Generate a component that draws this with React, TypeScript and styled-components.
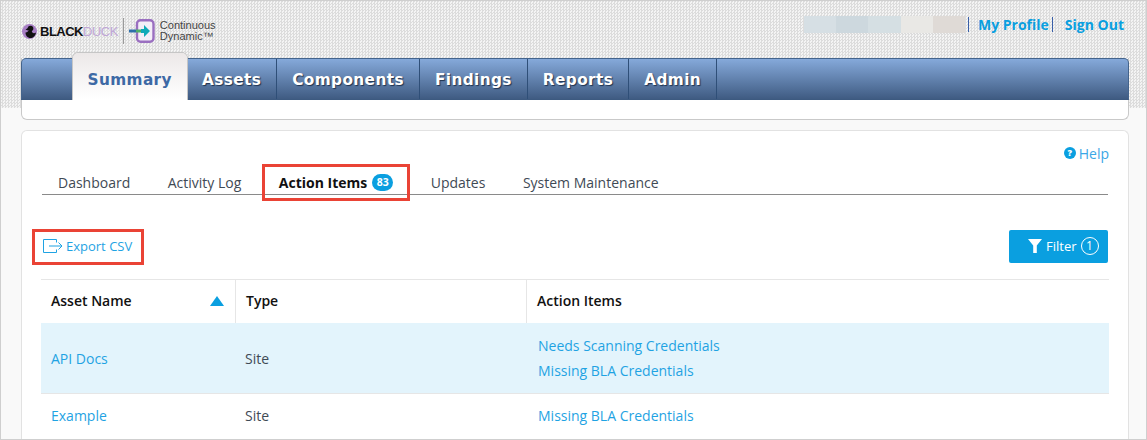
import React from "react";
import styled, { createGlobalStyle } from "styled-components";

const Global = createGlobalStyle`
  html, body { margin: 0; padding: 0; background: #f9f9f9; }
  body { font-family: "Open Sans", "Liberation Sans", sans-serif; color: #333; }
  * { box-sizing: border-box; }
`;

const Frame = styled.div`
  width: 1147px;
  height: 440px;
  overflow: hidden;
  border: 1px solid #cfcfcf;
  background: #f9f9f9;
`;

const Header = styled.header`
  height: 107px;
  padding: 0 17px 0 20px;
  background-color: #e8e8e8;
  background-image: repeating-conic-gradient(#dcdcdc 0 25%, #f4f4f4 0 50%);
  background-size: 3px 3px;
`;

const TopRow = styled.div`
  height: 57px;
  display: flex;
  justify-content: space-between;
  align-items: flex-start;
`;

const Logo = styled.div`
  display: flex;
  align-items: center;
  margin-top: 16px;
  height: 28px;
`;

const Duck = styled.svg`
  width: 15px;
  height: 15px;
  margin: 0 3px 0 1px;
`;

const BrandWord = styled.span<{ $light?: boolean }>`
  font-family: "Liberation Sans", Arial, sans-serif;
  font-size: 13px;
  font-weight: ${(p) => (p.$light ? 400 : 700)};
  letter-spacing: -0.5px;
  color: ${(p) => (p.$light ? "#bfa6d6" : "#111")};
`;

const LogoRule = styled.div`
  width: 1px;
  height: 26px;
  margin: 0 5px 0 5px;
  background: #9a9a9a;
`;

const ProductMark = styled.svg`
  width: 26px;
  height: 24px;
  margin-right: 5px;
`;

const ProductName = styled.div`
  font-family: "Liberation Sans", Arial, sans-serif;
  font-size: 11px;
  line-height: 11.5px;
  color: #444;
`;

const UserLinks = styled.div`
  display: flex;
  align-items: center;
  margin-top: 13px;
  margin-right: 5px;
  height: 20px;
  font-size: 14px;
  font-weight: 700;
  color: #0a9fe0;
`;

const Blur = styled.div`
  display: flex;
  height: 17px;
`;

const BlurBlock = styled.span<{ $c: string }>`
  width: 32.2px;
  background: ${(p) => p.$c};
`;

const Sep = styled.span<{ $gap: number }>`
  width: 1px;
  height: 15px;
  margin: 0 ${(p) => p.$gap}px 0 3px;
  background: #3a5fa8;
`;

const NavCard = styled.div`
  height: 62px;
  background: #fff;
  border: 1px solid #c9c9c9;
  border-top: none;
  border-radius: 0 0 6px 6px;
`;

const NavBar = styled.nav`
  height: 42px;
  margin: 0 -1px;
  padding-left: 51px;
  display: flex;
  border: 1px solid #44648c;
  border-bottom-color: #3d5a80;
  border-radius: 5px 5px 0 0;
  background: linear-gradient(#85a9da, #3f5b82);
`;

const NavItem = styled.div<{ $active?: boolean }>`
  height: ${(p) => (p.$active ? "47px" : "40px")};
  margin-top: ${(p) => (p.$active ? "-6px" : "0")};
  padding: ${(p) => (p.$active ? "6px 15px 0 14.5px" : "1px 15px 0")};
  display: flex;
  align-items: center;
  font-family: "DejaVu Sans", Verdana, sans-serif;
  font-size: 15.3px;
  font-weight: 700;
  letter-spacing: 0.4px;
  color: ${(p) => (p.$active ? "#3d69a5" : "#fff")};
  text-shadow: ${(p) => (p.$active ? "none" : "1px 1px 1px #1f3350")};
  background: ${(p) => (p.$active ? "linear-gradient(#ece8e8, #fff)" : "transparent")};
  border-right: ${(p) => (p.$active ? "none" : "1px solid #2f4f78")};
  border-radius: ${(p) => (p.$active ? "5px 5px 0 0" : "0")};
  box-shadow: ${(p) => (p.$active ? "0 -1px 0 #c6c6c6, 1px 0 0 #c6c6c6, -1px 0 0 #c6c6c6" : "none")};
`;

const Page = styled.main`
  margin: 22px 17px 0 20px;
  padding: 0 20px;
  height: 330px;
  background: #fff;
  border: 1px solid #e2e2e2;
  border-bottom: none;
  border-radius: 6px 6px 0 0;
`;

const HelpRow = styled.div`
  height: 35px;
  padding: 9px 0 0;
  margin-right: -1px;
  display: flex;
  justify-content: flex-end;
  align-items: center;
  gap: 3px;
  font-size: 14px;
  color: #3ba7e6;
`;

const HelpDot = styled.span`
  width: 12px;
  height: 12px;
  border-radius: 50%;
  background: #0a9fe0;
  color: #fff;
  font-size: 9px;
  font-weight: 800;
  line-height: 12px;
  text-align: center;
`;

const Tabs = styled.div`
  height: 29px;
  display: flex;
  border-bottom: 1px solid #8a8a8a;
`;

const Tab = styled.div<{ $active?: boolean }>`
  position: relative;
  height: 28px;
  padding: 4px 16px 0;
  margin-right: 5.5px;
  display: flex;
  align-items: center;
  gap: 5px;
  font-size: 14px;
  font-weight: ${(p) => (p.$active ? 700 : 400)};
  color: ${(p) => (p.$active ? "#111" : "#3f4a55")};
`;

const Count = styled.span`
  width: 21px;
  height: 17px;
  border-radius: 9px;
  background: #0a9fe0;
  color: #fff;
  font-size: 10.5px;
  font-weight: 700;
  line-height: 17px;
  text-align: center;
`;

const Callout = styled.span<{ $t: number; $r: number; $b: number; $l: number }>`
  position: absolute;
  top: ${(p) => p.$t}px;
  right: ${(p) => p.$r}px;
  bottom: ${(p) => p.$b}px;
  left: ${(p) => p.$l}px;
  border: 3px solid #ea4335;
`;

const Toolbar = styled.div`
  height: 85px;
  display: flex;
  justify-content: space-between;
  align-items: flex-start;
  padding-top: 35px;
  margin: 0 -1px;
  padding-right: 1px;
  border-bottom: 1px solid #e6e6e6;
`;

const ExportLink = styled.a`
  position: relative;
  display: flex;
  align-items: center;
  gap: 3px;
  height: 32px;
  padding-left: 2px;
  font-size: 13px;
  color: #1fa3e3;
`;

const ExportIcon = styled.svg`
  width: 20px;
  height: 14px;
`;

const FilterButton = styled.button`
  width: 99px;
  height: 33px;
  padding: 0 0 1px 19px;
  display: flex;
  align-items: center;
  gap: 4px;
  border: none;
  border-radius: 2px;
  background: #0a9fe0;
  color: #fff;
  font-family: inherit;
  font-size: 13px;
  font-weight: 400;
`;

const FilterCount = styled.span`
  width: 18px;
  height: 18px;
  border: 1px solid #fff;
  border-radius: 50%;
  font-size: 12px;
  line-height: 16px;
  text-align: center;
`;

const Grid = styled.div`
  display: grid;
  grid-template-columns: 195px 291px 1fr;
  margin: 0 -1px;
  font-size: 14px;
`;

const HeadCell = styled.div<{ $last?: boolean }>`
  height: 43px;
  padding: 0 11px 2px 10px;
  display: flex;
  align-items: center;
  justify-content: space-between;
  font-weight: 600;
  color: #111;
  border-right: ${(p) => (p.$last ? "none" : "1px solid #e6e6e6")};
`;

const SortArrow = styled.span`
  width: 0;
  height: 0;
  border-left: 7px solid transparent;
  border-right: 7px solid transparent;
  border-bottom: 10px solid #0a9fe0;
`;

const Cell = styled.div<{ $hl?: boolean; $h: number; $pl: number; $pt: number; $pb: number }>`
  height: ${(p) => p.$h}px;
  padding: ${(p) => p.$pt}px 10px ${(p) => p.$pb}px ${(p) => p.$pl}px;
  display: flex;
  flex-direction: column;
  justify-content: center;
  gap: 7px;
  background: ${(p) => (p.$hl ? "#e3f4fc" : "#fff")};
  border-bottom: 1px solid #e6e6e6;
  color: #3f4a55;
`;

const RowLink = styled.a`
  color: #1fa3e3;
  line-height: 18px;
`;

const rows = [
  { name: "API Docs", type: "Site", items: ["Needs Scanning Credentials", "Missing BLA Credentials"], hl: true, h: 71, pt: 1, pb: 0 },
  { name: "Example", type: "Site", items: ["Missing BLA Credentials"], hl: false, h: 46, pt: 0, pb: 2 },
];

export default function App() {
  return (
    <>
      <Global />
      <Frame>
        <Header>
          <TopRow>
            <Logo>
              <Duck viewBox="0 0 15 15">
                <circle cx="7.5" cy="7.5" r="7.5" fill="#a77ec4" />
                <circle cx="8.5" cy="4.5" r="2.8" fill="#111" />
                <path d="M6 4L3.500 5.500 6 6.500z" fill="#111" />
                <path d="M6.500 6.500C6 8 4 8.500 3.500 8.500c0 3 2 5.500 5 5.500 2.500 0 5-2 5.500-5.500-1.500 1-3 .8-3.800-.2-.5-.7-.5-1.500-.2-2.300z" fill="#111" />
              </Duck>
              <BrandWord>BLACK</BrandWord>
              <BrandWord $light>DUCK</BrandWord>
              <LogoRule />
              <ProductMark viewBox="0 0 26 24">
                <rect x="8" y="1.200" width="16.500" height="21.600" rx="3.500" fill="#f4eef8" stroke="#9a6fc0" strokeWidth="2.400" />
                <rect x="0" y="10.500" width="7" height="3" fill="#2f6fa8" />
                <rect x="7" y="10.500" width="5" height="3" fill="#4fb06a" />
                <path d="M12 10h3V6l6 6-6 6v-4h-3z" fill="#10a9b8" />
              </ProductMark>
              <ProductName>
                Continuous
                <br />
                Dynamic™
              </ProductName>
            </Logo>
            <UserLinks>
              <Blur>
                <BlurBlock $c="#d6dfe4" />
                <BlurBlock $c="#cdd8de" />
                <BlurBlock $c="#d5dfe3" />
                <BlurBlock $c="#e9e8e5" />
                <BlurBlock $c="#dfdad6" />
              </Blur>
              <Sep $gap={9} />
              My Profile
              <Sep $gap={12} />
              Sign Out
            </UserLinks>
          </TopRow>
          <NavCard>
            <NavBar>
              <NavItem $active>Summary</NavItem>
              <NavItem>Assets</NavItem>
              <NavItem>Components</NavItem>
              <NavItem>Findings</NavItem>
              <NavItem>Reports</NavItem>
              <NavItem>Admin</NavItem>
            </NavBar>
          </NavCard>
        </Header>
        <Page>
          <HelpRow>
            <HelpDot>?</HelpDot>
            Help
          </HelpRow>
          <Tabs>
            <Tab>Dashboard</Tab>
            <Tab>Activity Log</Tab>
            <Tab $active>
              Action Items
              <Count>83</Count>
              <Callout $t={-2} $r={-1} $b={-7} $l={-1} />
            </Tab>
            <Tab>Updates</Tab>
            <Tab>System Maintenance</Tab>
          </Tabs>
          <Toolbar>
            <ExportLink>
              <ExportIcon viewBox="0 0 20 14" fill="none" stroke="#1fa3e3" strokeWidth="1">
                <path d="M13.500 3.500V.500H.500v13h13v-3" />
                <path d="M6 7h13M15.500 3.500L19 7l-3.500 3.500" />
              </ExportIcon>
              Export CSV
              <Callout $t={-1} $r={-12} $b={-3} $l={-9} />
            </ExportLink>
            <FilterButton>
              <svg width="14" height="14" viewBox="0 0 14 14">
                <path d="M0 0h14L8.800 6.500V14H5.200V6.500z" fill="#fff" />
              </svg>
              Filter
              <FilterCount>1</FilterCount>
            </FilterButton>
          </Toolbar>
          <Grid>
            <HeadCell>
              Asset Name
              <SortArrow />
            </HeadCell>
            <HeadCell>Type</HeadCell>
            <HeadCell $last>Action Items</HeadCell>
            {rows.map((r) => (
              <React.Fragment key={r.name}>
                <Cell $hl={r.hl} $h={r.h} $pl={10} $pt={r.pt} $pb={r.pb}>
                  <RowLink>{r.name}</RowLink>
                </Cell>
                <Cell $hl={r.hl} $h={r.h} $pl={9} $pt={r.pt} $pb={r.pb}>
                  {r.type}
                </Cell>
                <Cell $hl={r.hl} $h={r.h} $pl={11} $pt={r.pt} $pb={r.pb}>
                  {r.items.map((i) => (
                    <RowLink key={i}>{i}</RowLink>
                  ))}
                </Cell>
              </React.Fragment>
            ))}
          </Grid>
        </Page>
      </Frame>
    </>
  );
}
